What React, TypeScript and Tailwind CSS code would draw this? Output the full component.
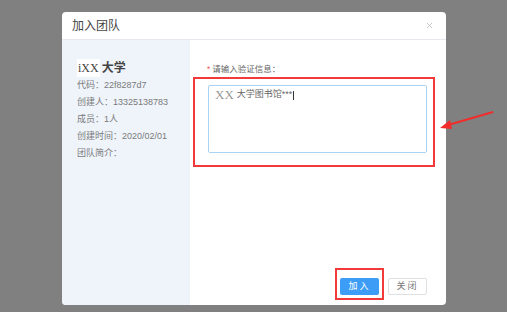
import { X } from "lucide-react";

const info = [
  { label: "代码：", value: "22f8287d7" },
  { label: "创建人：", value: "13325138783" },
  { label: "成员：", value: "1人" },
  { label: "创建时间：", value: "2020/02/01" },
  { label: "团队简介：", value: "" },
];

const sans = { fontFamily: '"Liberation Sans", "Noto Sans CJK SC", sans-serif' };

export default function App() {
  return (
    <div
      className="relative h-[312px] w-[507px] overflow-hidden bg-[#808080] pl-[62px] pt-[12px]"
      style={sans}
    >
      <div className="flex h-[293px] w-[384px] flex-col overflow-hidden rounded-[4px] bg-white">
        <div className="flex h-[28px] shrink-0 items-center justify-between border-b border-[#e6e9ee] pl-[10px] pr-[12px]">
          <span className="text-[12px] text-[#444]">加入团队</span>
          <X className="h-[9px] w-[9px] text-[#b5b5b5]" strokeWidth={2} />
        </div>

        <div className="flex flex-1">
          <div className="w-[128px] shrink-0 bg-[#eff4fb] pl-[15px] pt-[19px]">
            <div className="mb-[2px] flex items-center text-[12px] text-[#444]">
              <span className="bg-white px-[1px]" style={{ fontFamily: '"Liberation Serif", serif' }}>
                iXX
              </span>
              <span className="ml-[2px] font-semibold">大学</span>
            </div>
            <div className="flex flex-col gap-[4px] text-[9px] leading-[13px] text-[#7a7a7a]">
              {info.map((row) => (
                <div key={row.label}>
                  {row.label}
                  {row.value}
                </div>
              ))}
            </div>
          </div>

          <div className="flex flex-1 flex-col pb-[5px] pl-[3px] pr-[11px] pt-[23px]">
            <div className="ml-[14px] text-[8.5px] leading-[12px] text-[#666]">
              <span className="mr-[2px] text-[#f15a5a]">*</span>请输入验证信息：
            </div>
            <div className="mt-[2px] border-2 border-[#f23a3a] pb-[12px] pl-[13px] pr-[6px] pt-[6px]">
              <div className="h-[68px] rounded-[2px] border border-[#a9d2f3] px-[6px] pt-[2px]">
                <div className="flex items-center text-[9px] text-[#666]">
                  <span
                    className="mr-[3px] text-[13px] leading-[14px] text-[#999]"
                    style={{ fontFamily: '"Liberation Serif", serif' }}
                  >
                    XX
                  </span>
                  大学图书馆***
                  <span className="ml-[1px] inline-block h-[9px] w-px bg-[#333]" />
                </div>
              </div>
            </div>

            <div className="flex-1" />

            <div className="flex items-end justify-end gap-[4px] pr-[8px]">
              <div className="border-2 border-[#f23a3a] pb-[3px] pl-[3px] pr-[3px] pt-[8px]">
                <button className="flex h-[17px] w-[39px] items-center justify-center rounded-[2px] bg-[#3d9df6] text-[9px] tracking-[2px] text-white">
                  加入
                </button>
              </div>
              <button className="mb-[5px] flex h-[17px] w-[39px] items-center justify-center rounded-[2px] border border-[#e0e0e0] bg-white text-[9px] tracking-[2px] text-[#777]">
                关闭
              </button>
            </div>
          </div>
        </div>
      </div>

      <svg className="absolute left-[436px] top-[108px]" width="60" height="26" viewBox="0 0 60 26">
        <line x1="57" y1="4" x2="12" y2="17" stroke="#f22b2b" strokeWidth="2" />
        <polygon points="4,20 14,12 16,21" fill="#f22b2b" />
      </svg>
    </div>
  );
}
